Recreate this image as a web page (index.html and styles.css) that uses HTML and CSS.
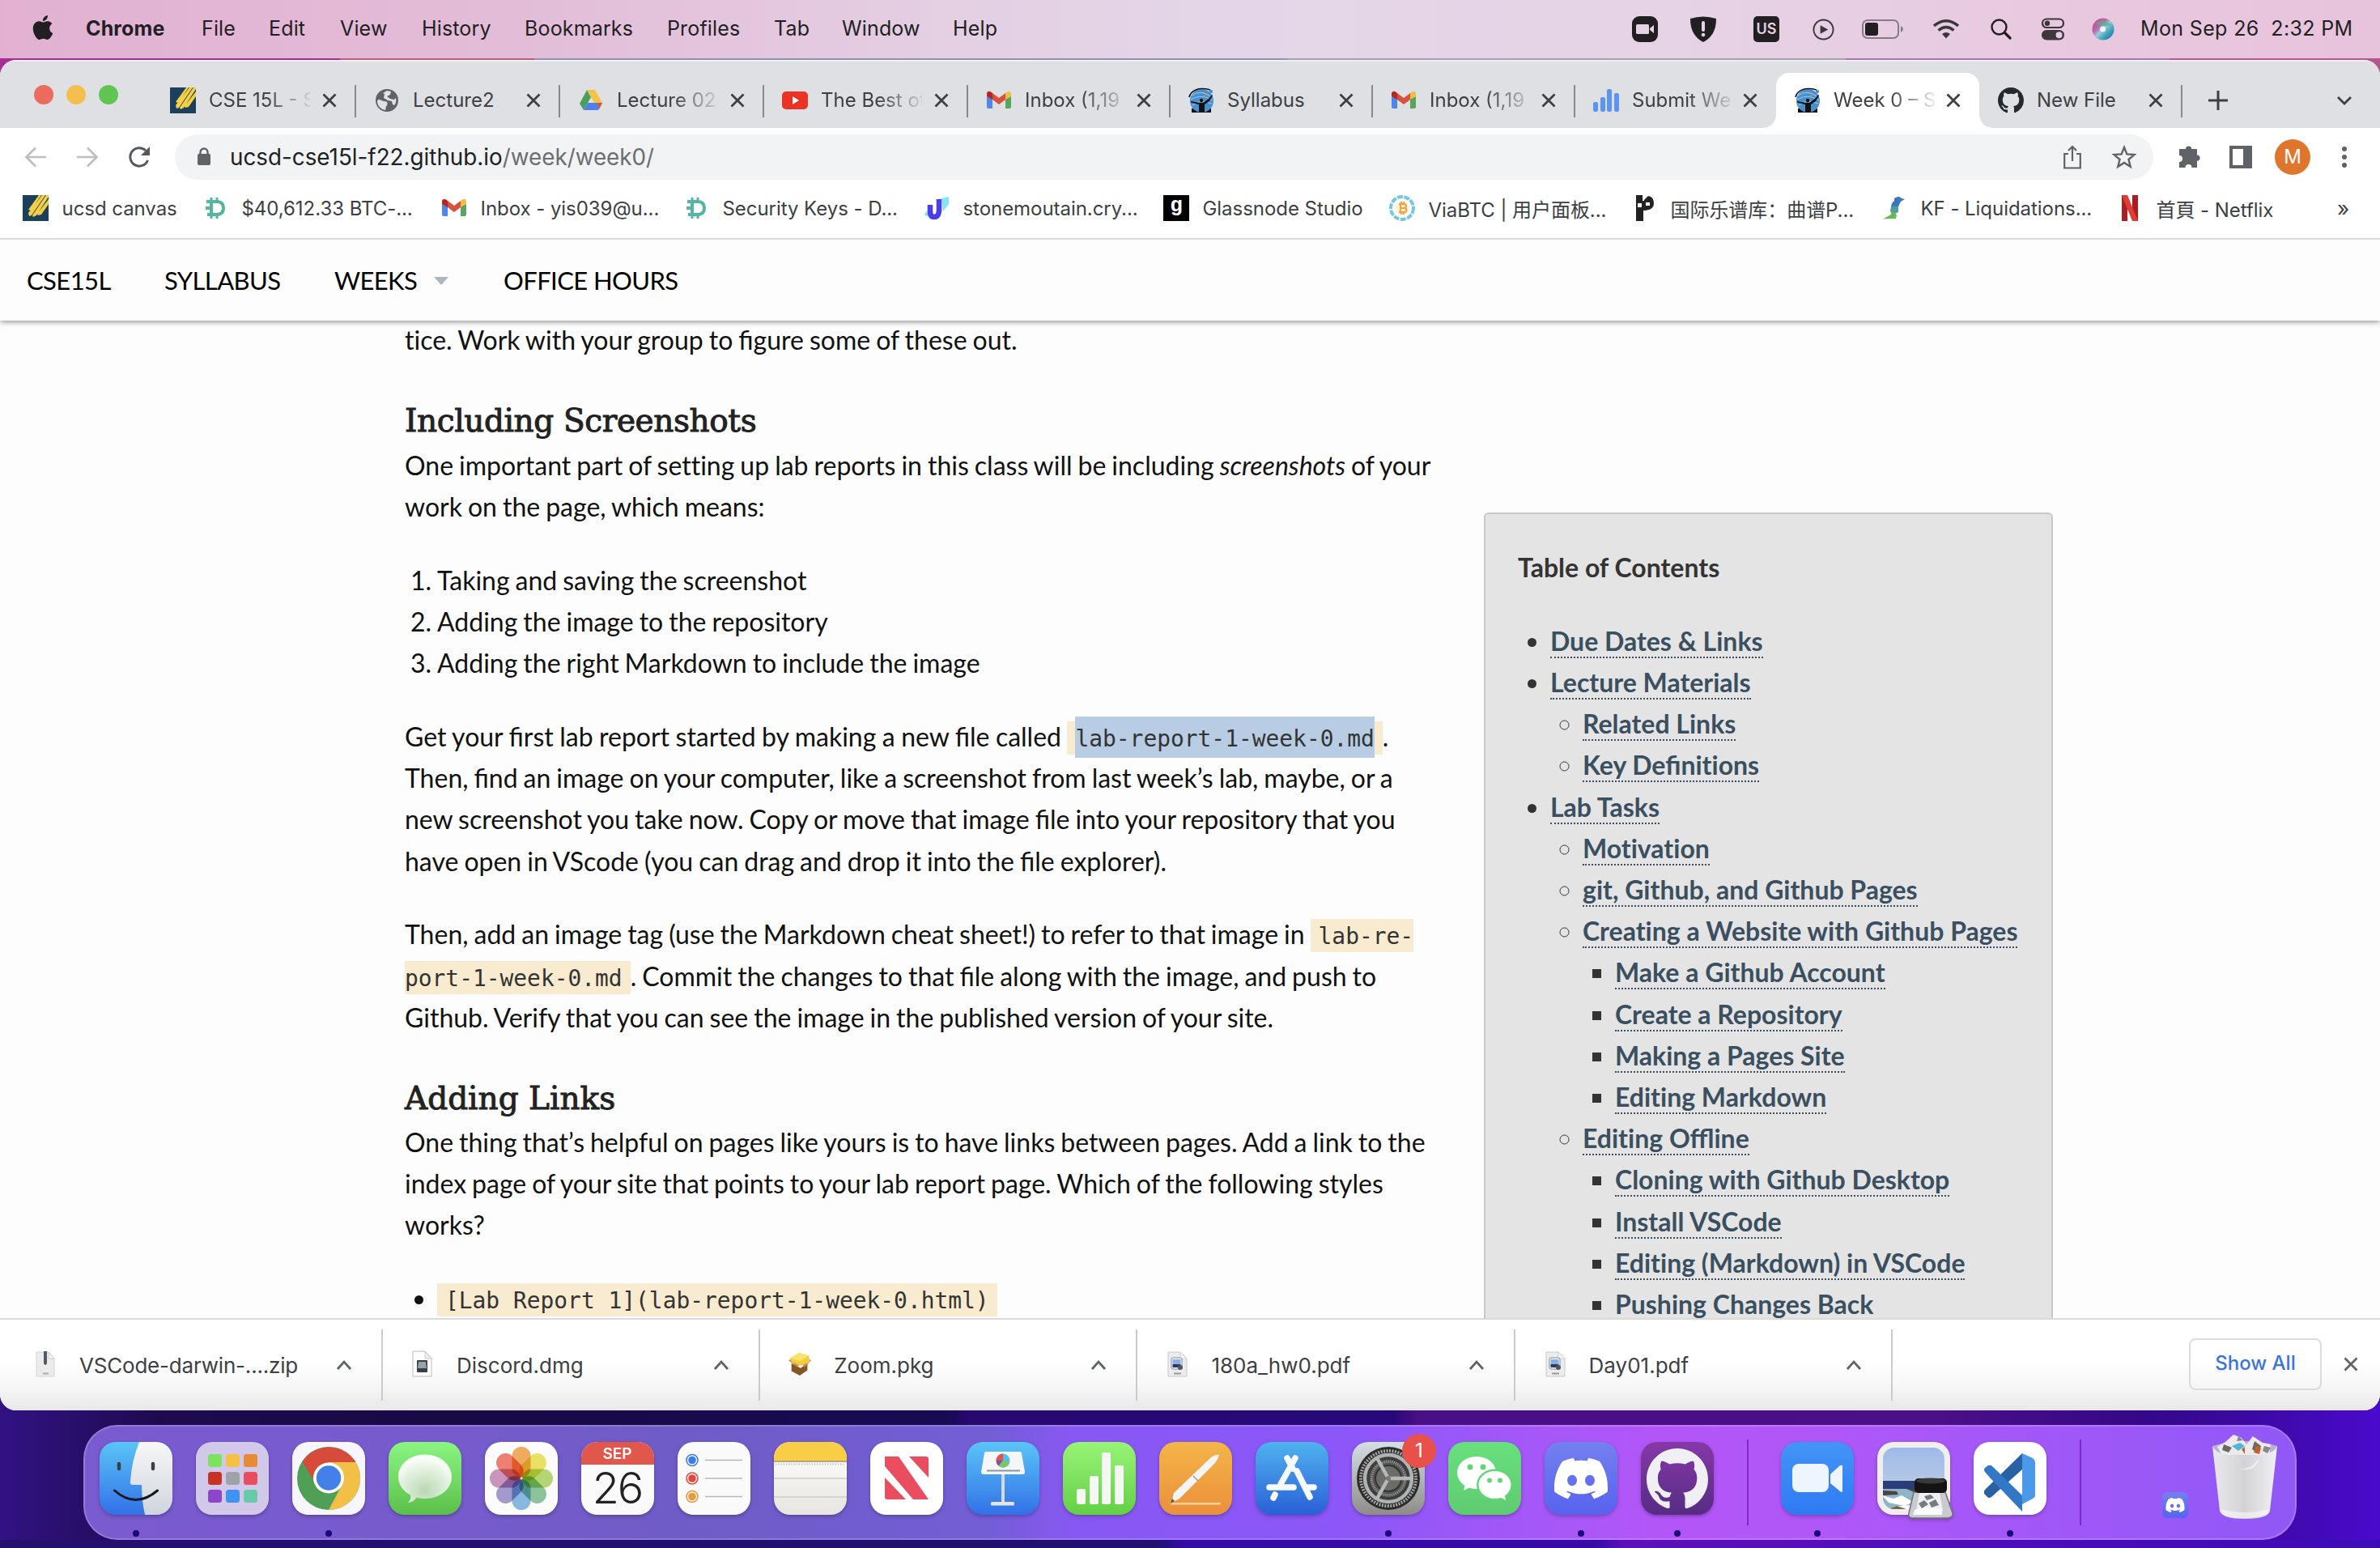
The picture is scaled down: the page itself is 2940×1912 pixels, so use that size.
FILE: index.html
```html
<!DOCTYPE html>
<html lang="en">
<head>
<meta charset="utf-8">
<title>Week 0 – Software Tools</title>
<link rel="stylesheet" href="styles.css">
</head>
<body>
<svg class="defs" width="0" height="0" aria-hidden="true">
  <defs>
    <linearGradient id="g-blue" x1="0" y1="0" x2="0" y2="1"><stop offset="0" stop-color="#5ac4f7"/><stop offset="1" stop-color="#3271e8"/></linearGradient>
    <linearGradient id="g-store" x1="0" y1="0" x2="0" y2="1"><stop offset="0" stop-color="#4fb3ee"/><stop offset="1" stop-color="#2a5fd8"/></linearGradient>
    <linearGradient id="g-green" x1="0" y1="0" x2="0" y2="1"><stop offset="0" stop-color="#8bf582"/><stop offset="1" stop-color="#5bc04a"/></linearGradient>
    <linearGradient id="g-num" x1="0" y1="0" x2="0" y2="1"><stop offset="0" stop-color="#98f477"/><stop offset="1" stop-color="#63d044"/></linearGradient>
    <linearGradient id="g-orange" x1="0" y1="0" x2="0" y2="1"><stop offset="0" stop-color="#f4b548"/><stop offset="1" stop-color="#eb8f3c"/></linearGradient>
    <linearGradient id="g-grey" x1="0" y1="0" x2="0" y2="1"><stop offset="0" stop-color="#d5dfe6"/><stop offset="1" stop-color="#8e8c89"/></linearGradient>
    <linearGradient id="g-white" x1="0" y1="0" x2="0" y2="1"><stop offset="0" stop-color="#f7f7f7"/><stop offset="1" stop-color="#cfd5dd"/></linearGradient>
    <linearGradient id="g-paper" x1="0" y1="0" x2="0" y2="1"><stop offset="0" stop-color="#ffffff"/><stop offset="1" stop-color="#e8e5e0"/></linearGradient>
    <linearGradient id="g-disc" x1="0" y1="0" x2="0" y2="1"><stop offset="0" stop-color="#7480ef"/><stop offset="1" stop-color="#5763ee"/></linearGradient>
    <linearGradient id="g-hub" x1="0" y1="0" x2="0" y2="1"><stop offset="0" stop-color="#8638a8"/><stop offset="1" stop-color="#562c84"/></linearGradient>
    <linearGradient id="g-zoom" x1="0" y1="0" x2="0" y2="1"><stop offset="0" stop-color="#4394f8"/><stop offset="1" stop-color="#2f7af3"/></linearGradient>
    <linearGradient id="g-wechat" x1="0" y1="0" x2="0" y2="1"><stop offset="0" stop-color="#68e07e"/><stop offset="1" stop-color="#5fcb70"/></linearGradient>
    <linearGradient id="g-sky" x1="0" y1="0" x2="0" y2="1"><stop offset="0" stop-color="#9bb7e9"/><stop offset="1" stop-color="#b4c9e6"/></linearGradient>
    <linearGradient id="g-bin" x1="0" y1="0" x2="1" y2="0"><stop offset="0" stop-color="#e9e8ec"/><stop offset=".5" stop-color="#d3d2d5"/><stop offset="1" stop-color="#f1f0f4"/></linearGradient>
    <radialGradient id="g-bubble" cx=".5" cy=".75" r=".7"><stop offset="0" stop-color="#b9d8b3"/><stop offset="1" stop-color="#fbfffa"/></radialGradient>
    <linearGradient id="g-siri" x1="0" y1="0" x2="1" y2="1"><stop offset="0" stop-color="#d83a72"/><stop offset=".35" stop-color="#b36bb4"/><stop offset=".5" stop-color="#9fc9dd"/><stop offset=".7" stop-color="#3aa6b4"/><stop offset="1" stop-color="#2c4fc0"/></linearGradient>
    <symbol id="octocat" viewBox="0 0 16 16"><path d="M8 0C3.58 0 0 3.58 0 8c0 3.54 2.29 6.53 5.47 7.59.4.07.55-.17.55-.38 0-.19-.01-.82-.01-1.49-2.01.37-2.53-.49-2.69-.94-.09-.23-.48-.94-.82-1.13-.28-.15-.68-.52-.01-.53.63-.01 1.08.58 1.23.82.72 1.21 1.87.87 2.33.66.07-.52.28-.87.51-1.07-1.78-.2-3.64-.89-3.64-3.95 0-.87.31-1.59.82-2.15-.08-.2-.36-1.02.08-2.12 0 0 .67-.21 2.2.82.64-.18 1.32-.27 2-.27.68 0 1.36.09 2 .27 1.53-1.04 2.2-.82 2.2-.82.44 1.1.16 1.92.08 2.12.51.56.82 1.27.82 2.15 0 3.07-1.87 3.75-3.65 3.95.29.25.54.73.54 1.48 0 1.07-.01 1.93-.01 2.2 0 .21.15.46.55.38A8.013 8.013 0 0016 8c0-4.42-3.58-8-8-8z"/></symbol>
    <symbol id="discord" viewBox="0 0 24 24"><path d="M20.317 4.3698a19.7913 19.7913 0 00-4.8851-1.5152.0741.0741 0 00-.0785.0371c-.211.3753-.4447.8648-.6083 1.2495-1.8447-.2762-3.68-.2762-5.4868 0-.1636-.3933-.4058-.8742-.6177-1.2495a.077.077 0 00-.0785-.037 19.7363 19.7363 0 00-4.8852 1.515.0699.0699 0 00-.0321.0277C.5334 9.0458-.319 13.5799.0992 18.0578a.0824.0824 0 00.0312.0561c2.0528 1.5076 4.0413 2.4228 5.9929 3.0294a.0777.0777 0 00.0842-.0276c.4616-.6304.8731-1.2952 1.226-1.9942a.076.076 0 00-.0416-.1057c-.6528-.2476-1.2743-.5495-1.8722-.8923a.077.077 0 01-.0076-.1277c.1258-.0943.2517-.1923.3718-.2914a.0743.0743 0 01.0776-.0105c3.9278 1.7933 8.18 1.7933 12.0614 0a.0739.0739 0 01.0785.0095c.1202.099.246.1981.3728.2924a.077.077 0 01-.0066.1276 12.2986 12.2986 0 01-1.873.8914.0766.0766 0 00-.0407.1067c.3604.698.7719 1.3628 1.225 1.9932a.076.076 0 00.0842.0286c1.961-.6067 3.9495-1.5219 6.0023-3.0294a.077.077 0 00.0313-.0552c.5004-5.177-.8382-9.6739-3.5485-13.6604a.061.061 0 00-.0312-.0286zM8.02 15.3312c-1.1825 0-2.1569-1.0857-2.1569-2.419 0-1.3332.9555-2.4189 2.157-2.4189 1.2108 0 2.1757 1.0952 2.1568 2.419 0 1.3332-.9555 2.4189-2.1569 2.4189zm7.9748 0c-1.1825 0-2.1569-1.0857-2.1569-2.419 0-1.3332.9554-2.4189 2.1569-2.4189 1.2108 0 2.1757 1.0952 2.1568 2.419 0 1.3332-.946 2.4189-2.1568 2.4189z"/></symbol>
    <symbol id="canvas" viewBox="0 0 32 32"><path fill="#1c3f5c" d="M0 0h32v32H0z"/><path fill="#f5cf45" d="M20 0h3L10 19l-3-1zM24 0h4L11 25l-3 1-1-4zM29 0h3v2L17 25l-4 2-1-2zM32 5v6L23 24l-4 1-1-2z"/></symbol>
    <symbol id="gmail" viewBox="0 0 32 32"><path fill="#4f86ec" d="M1 11v13a2 2 0 002 2h5V14z"/><path fill="#58a55c" d="M31 11v13a2 2 0 01-2 2h-5V14z"/><path fill="#b5271d" d="M1 11V8c0-3 3-4 5-2.500l2 1.500v8z"/><path fill="#f2bd42" d="M31 11V8c0-3-3-4-5-2.500L24 7v8z"/><path fill="#d85040" d="M8 7l8 6 8-6v8l-8 6-8-6z"/></symbol>
    <symbol id="week" viewBox="0 0 32 32"><path fill="#111" d="M4 26h24v5H4z"/><circle cx="16.500" cy="16.500" r="14.500" fill="#4a90cf"/><path d="M4 10q12-8 24 2M3 15q13-8 27 1M5 22q10-8 24-2" fill="none" stroke="#8fc4ec" stroke-width="1.200"/><path d="M1 12C3 4 12-1 27 3" fill="none" stroke="#111" stroke-width="1.600"/><circle cx="28" cy="5" r="2" fill="#3d86d6"/><circle cx="20" cy="10" r="1.300" fill="#e07a3a"/><circle cx="16" cy="16" r="2.200" fill="#111"/><path fill="#111" d="M3 17l11 2h4l7-5 4-5 1 1-4 7-6 4v10h-7V21L3 18.500z"/></symbol>
    <symbol id="btc" viewBox="0 0 32 32"><path fill="none" stroke="#55b5a0" stroke-width="4" d="M5 8h14q7 1 7 8t-7 8H6M11 9v15M4 16h8"/><path stroke="#55b5a0" stroke-width="3" d="M11 3v5M18 3v5M11 25v4M18 25v4"/></symbol>
    <symbol id="close" viewBox="0 0 20 20"><path d="M2.500 2.500l15 15M17.500 2.500l-15 15" fill="none" stroke="currentColor" stroke-width="2.800"/></symbol>
    <symbol id="up" viewBox="0 0 20 14"><path d="M2 12l8-9 8 9" fill="none" stroke="currentColor" stroke-width="2.800"/></symbol>
    <symbol id="pdf" viewBox="0 0 28 34"><path fill="#ececec" stroke="#c9c9c9" d="M3 2h15l8 8v22H3z"/><path fill="#fff" stroke="#ccc" d="M18 2v8h8z"/><rect x="7" y="9" width="13" height="14" rx="2" fill="#f9f9f9" stroke="#7b8ca8"/><path fill="#8ab0e6" d="M8.500 11h10v6h-10z"/><path fill="#2c3c60" d="M8.500 17h10v4h-10z"/><circle cx="18" cy="21" r="3" fill="#555"/><path stroke="#999" stroke-width="2" d="M10 28.500h9"/></symbol>
  </defs>
</svg>

<div class="desktop">
  <header class="menubar">
    <svg class="apple" viewBox="0 0 24 24"><path d="M12.152 6.896c-.948 0-2.415-1.078-3.960-1.040-2.040.027-3.910 1.183-4.961 3.014-2.117 3.675-.546 9.103 1.519 12.090 1.013 1.454 2.208 3.090 3.792 3.039 1.520-.065 2.090-.987 3.935-.987 1.831 0 2.350.987 3.960.948 1.637-.026 2.676-1.480 3.676-2.948 1.156-1.688 1.636-3.325 1.662-3.415-.039-.013-3.182-1.221-3.220-4.857-.026-3.040 2.480-4.494 2.597-4.559-1.429-2.090-3.623-2.324-4.390-2.376-2-.156-3.675 1.090-4.610 1.090zM15.530 3.830c.843-1.012 1.400-2.427 1.245-3.830-1.207.052-2.662.805-3.532 1.818-.780.896-1.454 2.338-1.273 3.714 1.338.104 2.715-.688 3.559-1.701"/></svg>
    <nav class="menus">
      <b>Chrome</b><span>File</span><span>Edit</span><span>View</span><span>History</span><span>Bookmarks</span><span>Profiles</span><span>Tab</span><span>Window</span><span>Help</span>
    </nav>
    <div class="status">
      <svg viewBox="0 0 32 32" width="32" height="32"><rect width="32" height="32" rx="9" fill="#221f22"/><rect x="5" y="10" width="16" height="12" rx="1.500" fill="#e6d2e5"/><path fill="#e6d2e5" d="M22 15l5-4v10l-5-4z"/></svg>
      <svg viewBox="0 0 32 32" width="32" height="32"><path fill="#221f22" d="M0 3Q16-2 32 3C32 18 26 27 16 32 6 27 0 18 0 3z"/><path stroke="#e6d2e5" stroke-width="4" stroke-linecap="round" d="M16 8v9"/><circle cx="16" cy="23" r="2.300" fill="#e6d2e5"/></svg>
      <span class="kbd">US</span>
      <svg viewBox="0 0 28 28" width="27" height="27"><circle cx="14" cy="14" r="12.500" fill="none" stroke="#3c373c" stroke-width="2"/><path fill="#3c373c" d="M10 8.500l10 5.500-10 5.500z"/></svg>
      <svg viewBox="0 0 52 26" width="52" height="26"><rect x="1" y="2" width="44" height="22" rx="6" fill="none" stroke="#857a85" stroke-width="2"/><rect x="4" y="5" width="16" height="16" rx="3" fill="#221f22"/><path fill="#857a85" d="M48 9q6 4 0 8z"/></svg>
      <svg viewBox="0 0 32 24" width="32" height="24"><g fill="none" stroke="#3c373c" stroke-width="3.400"><path d="M1 8Q16-4.500 31 8"/><path d="M6.500 13.500q9.500-8 19 0"/></g><path fill="#3c373c" d="M11 18q5-4 10 0l-5 5.500z"/></svg>
      <svg viewBox="0 0 26 26" width="26" height="26"><circle cx="10.500" cy="10.500" r="9" fill="none" stroke="#221f22" stroke-width="2.400"/><path stroke="#221f22" stroke-width="3.200" stroke-linecap="round" d="M17.500 17.500l6.500 6.500"/></svg>
      <svg viewBox="0 0 28 28" width="28" height="28"><rect x="1" y="1.500" width="26" height="10.500" rx="5.200" fill="none" stroke="#3c373c" stroke-width="2.200"/><circle cx="7" cy="6.700" r="3.200" fill="#3c373c"/><rect y="15" width="28" height="12.500" rx="6.200" fill="#3c373c"/><circle cx="21.500" cy="21.200" r="4" fill="#e6cadf"/></svg>
      <svg viewBox="0 0 28 28" width="28" height="28"><circle cx="14" cy="14" r="13.500" fill="url(#g-siri)"/><path d="M4 7Q14 0 25 9 14 12 4 7z" fill="#4fb58c" opacity=".7"/><circle cx="13.500" cy="14" r="3.500" fill="#fff" opacity=".85"/></svg>
      <span class="clock">Mon Sep 26&nbsp; 2:32 PM</span>
    </div>
  </header>

  <main class="window">
    <div class="tabstrip">
      <div class="lights"><i class="red"></i><i class="amber"></i><i class="green"></i></div>
      <div class="tabs">
        <div class="tab sep"><svg class="fav"><use href="#canvas"/></svg><span class="fade">CSE 15L - S</span><svg class="x"><use href="#close"/></svg></div>
        <div class="tab sep"><svg class="fav" viewBox="0 0 32 32"><circle cx="16" cy="16" r="14" fill="#5f6368"/><path fill="#dee0e4" d="M5 15c4 0 5 2 8 2 4 0 4 3 3 5-2 2-1 4-2 6C8 27 4 22 4 17zM16 4l5 1-1 4-4 2 4 3 5 1 2-2c1 3 0 7-2 9l-2-1-1-4-5-1-5-3 1-5-2-1z"/></svg><span>Lecture2</span><svg class="x"><use href="#close"/></svg></div>
        <div class="tab sep"><svg class="fav" viewBox="0 0 32 32"><path fill="#4c9f5a" d="M11 3l5 9-9 16-5-8z"/><path fill="#f5c344" d="M11 3h10l9 16H20z"/><path fill="#4f80e8" d="M7 28l5-9h18l-5 9z"/><path fill="#d9513f" d="M24 19h6l-4 8z"/></svg><span class="fade">Lecture 02</span><svg class="x"><use href="#close"/></svg></div>
        <div class="tab sep"><svg class="fav" viewBox="0 0 32 32"><rect y="5" width="32" height="22" rx="5" fill="#ea3323"/><path fill="#fff" d="M13 11l8 5-8 5z"/></svg><span class="fade">The Best of</span><svg class="x"><use href="#close"/></svg></div>
        <div class="tab sep"><svg class="fav"><use href="#gmail"/></svg><span class="fade">Inbox (1,19</span><svg class="x"><use href="#close"/></svg></div>
        <div class="tab sep"><svg class="fav"><use href="#week"/></svg><span>Syllabus</span><svg class="x"><use href="#close"/></svg></div>
        <div class="tab sep"><svg class="fav"><use href="#gmail"/></svg><span class="fade">Inbox (1,19</span><svg class="x"><use href="#close"/></svg></div>
        <div class="tab"><svg class="fav" viewBox="0 0 32 32"><g fill="#5b95ef"><rect y="18" width="6" height="12" rx="2"/><rect x="9" y="12" width="6" height="18" rx="2"/><rect x="17" y="2" width="6" height="28" rx="2"/><rect x="26" y="7" width="6" height="23" rx="2"/></g></svg><span class="fade">Submit We</span><svg class="x"><use href="#close"/></svg></div>
        <div class="tab active"><svg class="fav"><use href="#week"/></svg><span class="fade">Week 0 – S</span><svg class="x"><use href="#close"/></svg></div>
        <div class="tab sep"><svg class="fav" fill="#24292f"><use href="#octocat"/></svg><span>New File</span><svg class="x"><use href="#close"/></svg></div>
      </div>
      <svg class="plus" viewBox="0 0 26 26"><path d="M13 1v24M1 13h24" stroke="#3c4043" stroke-width="3"/></svg>
      <svg class="tabsearch" viewBox="0 0 20 14"><path d="M2 3l8 8 8-8" fill="none" stroke="#3c4043" stroke-width="2.800"/></svg>
    </div>

    <div class="toolbar">
      <svg class="nav-ico" viewBox="0 0 28 28"><path d="M27 14H3M14 2.500L2.500 14 14 25.500" fill="none" stroke="#bcbec0" stroke-width="2.600"/></svg>
      <svg class="nav-ico" viewBox="0 0 28 28"><path d="M1 14h24M14 2.500L25.500 14 14 25.500" fill="none" stroke="#bcbec0" stroke-width="2.600"/></svg>
      <svg class="nav-ico" viewBox="0 0 28 28"><path d="M24.500 18A11.200 11.200 0 1 1 22 6" fill="none" stroke="#55585c" stroke-width="3"/><path fill="#55585c" d="M27 1v11H16z"/></svg>
      <div class="omnibox">
        <svg class="lock" viewBox="0 0 18 24"><rect x="1" y="8" width="16" height="14" rx="2" fill="#5f6368"/><path d="M4.500 9V6a4.500 4.500 0 019 0v3" fill="none" stroke="#5f6368" stroke-width="2.400"/></svg>
        <span class="url">ucsd-cse15l-f22.github.io<span>/week/week0/</span></span>
        <svg class="share" viewBox="0 0 24 30"><path d="M7 11H2.200v17.500h19.600V11H17M12 20V2.500M7 7l5-5 5 5" fill="none" stroke="#5f6368" stroke-width="2.200"/></svg>
        <svg class="star" viewBox="0 0 30 30"><path d="M15 3l3.400 8.400 9 .7-6.900 5.900 2.200 8.800L15 22l-7.700 4.800 2.200-8.800-6.900-5.900 9-.7z" fill="none" stroke="#5f6368" stroke-width="2.400"/></svg>
      </div>
      <svg class="ext" viewBox="0 0 30 30"><path fill="#5f6368" d="M11 5a3.600 3.600 0 017.200 0H25v7.500a3.600 3.600 0 010 7.200V28h-6.500a4 4 0 00-8 0H3v-7a4 4 0 000-8V5z"/></svg>
      <svg class="panel" viewBox="0 0 28 28"><path fill="#5f6368" fill-rule="evenodd" d="M0 0h28v28H0zM4 4v20h13V4z"/></svg>
      <span class="avatar">M</span>
      <svg class="dots" viewBox="0 0 8 28"><g fill="#5f6368"><circle cx="4" cy="4" r="3"/><circle cx="4" cy="14" r="3"/><circle cx="4" cy="24" r="3"/></g></svg>
    </div>

    <div class="bookmarks">
      <a><svg class="fav"><use href="#canvas"/></svg>ucsd canvas</a>
      <a><svg class="fav"><use href="#btc"/></svg>$40,612.33 BTC-...</a>
      <a><svg class="fav"><use href="#gmail"/></svg>Inbox - yis039@u...</a>
      <a><svg class="fav"><use href="#btc"/></svg>Security Keys - D...</a>
      <a><svg class="fav" viewBox="0 0 32 32"><path d="M2 25l6-6" stroke="#7fe6f5" stroke-width="4"/><path d="M22 4l9-2v9l-7 9z" fill="#7fe6f5"/><path d="M8 12v9q0 6 5 6t6-7V5" fill="none" stroke="#4a3df0" stroke-width="6.500"/></svg>stonemoutain.cry...</a>
      <a><span class="fav glass">g</span>Glassnode Studio</a>
      <a><svg class="fav" viewBox="0 0 32 32"><circle cx="16" cy="16" r="14" fill="none" stroke="#77c6e0" stroke-width="4" stroke-dasharray="7 1.500"/><circle cx="16" cy="16" r="8.500" fill="#fdf0dc"/><path d="M12 11h6q3 0 3 2.500T18 16h-5 5.500q3 0 3 2.500t-3 2.500H12M14 11v10M15 8v3M18 8v3M15 21v3M18 21v3" fill="none" stroke="#f2a33c" stroke-width="2"/></svg>ViaBTC | 用户面板...</a>
      <a><svg class="fav" viewBox="0 0 32 32"><path fill="#222" d="M6 0h9v7l6-6q7 1 7 9 0 9-13 9v13H6z"/><path fill="#fff" d="M8 10h5v5H8zM18 9h5v4h-5zM14 0h2v7h-2z"/></svg>国际乐谱库：曲谱P...</a>
      <a><svg class="fav" viewBox="0 0 32 32"><path fill="#3b77bd" d="M16 4q6-4 9 0l4 1-5 3-3 6-9 1q0-5 4-8z"/><path fill="#4f9e9e" d="M12 14h9v7l-7 3-3-4z"/><path fill="#6cb854" d="M14 20l5 4-1 5-16 .500 9-5z"/></svg>KF - Liquidations...</a>
      <a><svg class="fav" viewBox="0 0 32 32"><path fill="#a91f1f" d="M6 0h7v32H6zM19 0h7v32h-7z"/><path fill="#e23b33" d="M6 0h7l13 32h-7z"/></svg>首頁 - Netflix</a>
      <span class="more">»</span>
    </div>

    <section class="page">
      <nav class="sitenav"><span>CSE15L</span><span>SYLLABUS</span><span>WEEKS<i class="caret"></i></span><span>OFFICE HOURS</span></nav>
      <div class="content">
        <article>
          <p><span class="plain">tice.</span> Work with your group to figure some of these out.</p>
          <h3>Including Screenshots</h3>
          <p>One important part of <span class="plain">setting</span> up lab reports in this class will be including <em>screenshots</em> of your<br>work on the page, which means:</p>
          <ol><li>Taking and saving the screenshot</li><li>Adding the image to the repository</li><li>Adding the right Markdown to include the image</li></ol>
          <p><span class="loose">Get your first lab report started by making a new file called </span><code><mark>lab-report-1-week-0.md</mark></code>.<br>Then, find an image on your computer, like a screenshot from last week’s lab, maybe, or a<br>new screenshot you take now. Copy or move that image file into your repository that you<br>have open in VScode (you can drag and drop it into the file explorer).</p>
          <p>Then, add an image tag (use the Markdown cheat sheet!) to refer to that image in <code>lab-re-<br>port-1-week-0.md</code>. Commit the changes to that file along with the image, and push to<br>Github. Verify that you can see the image in the published version of your site.</p>
          <h3 class="second">Adding Links</h3>
          <p>One thing that’s helpful on pages like yours is to have links between pages. Add a link to the<br>index page of your site that points to your lab report page. Which of the following styles<br>works?</p>
          <ul><li><code>[Lab Report 1](lab-report-1-week-0.html)</code></li></ul>
        </article>
        <aside class="toc">
          <div class="toc-title">Table of Contents</div>
          <ul>
            <li><a>Due Dates &amp; Links</a></li>
            <li><a>Lecture Materials</a>
              <ul><li><a>Related Links</a></li><li><a class="joined">Key Defini<span class="plain">tions</span></a></li></ul></li>
            <li><a>Lab Tasks</a>
              <ul>
                <li><a>Motivation</a></li>
                <li><a>git, Github, and Github Pages</a></li>
                <li><a>Creating a Website with Github Pages</a>
                  <ul><li><a>Make a Github Account</a></li><li><a>Create a Repository</a></li><li><a>Making a Pages Site</a></li><li><a>Editing Markdown</a></li></ul></li>
                <li><a>Editing <span class="joined">Offline</span></a>
                  <ul><li><a>Cloning with Github Desktop</a></li><li><a>Install VSCode</a></li><li><a>Editing (Markdown) in VSCode</a></li><li><a>Pushing Changes Back</a></li></ul></li>
              </ul></li>
          </ul>
        </aside>
      </div>
    </section>

    <footer class="shelf">
      <div class="dl first"><svg class="file" viewBox="0 0 28 34"><path fill="#ececec" stroke="#d4d4d4" d="M3 2h15l7 8v22H3z"/><path fill="#fafafa" stroke="#ccc" d="M18 2v8h7z"/><path fill="#4e5a66" d="M12 1h4v15q-2 4-4 0z"/><path stroke="#aaa" stroke-width="2" d="M11 28.500h7"/></svg><span>VSCode-darwin-....zip</span><svg class="up"><use href="#up"/></svg></div>
      <div class="dl"><svg class="file" viewBox="0 0 28 34"><path fill="#fdfdfd" stroke="#bdbdbd" d="M2 1h15l8 9v22H2z"/><path fill="#eee" stroke="#ccc" d="M17 1v9h8z"/><rect x="7" y="12" width="13" height="15" rx="1" fill="#3a3f42"/><path fill="#93a5a8" d="M9 14h9l1 8H8z"/></svg><span>Discord.dmg</span><svg class="up"><use href="#up"/></svg></div>
      <div class="dl"><svg class="file" viewBox="0 0 32 34"><path fill="#8a5526" d="M5 16l12 6 9-6v9l-10 7-11-6z"/><path fill="#c98d56" d="M1 12l6-3 10 6-4 6zM31 12l-5-3-9 6 5 6z"/><path fill="#f2cd3c" d="M3 9l12-7 13 4 1 8-12 5L5 14z"/><path fill="#f8e26c" d="M3 9l12-7 13 4-12 7z"/></svg><span>Zoom.pkg</span><svg class="up"><use href="#up"/></svg></div>
      <div class="dl"><svg class="file"><use href="#pdf"/></svg><span>180a_hw0.pdf</span><svg class="up"><use href="#up"/></svg></div>
      <div class="dl"><svg class="file"><use href="#pdf"/></svg><span>Day01.pdf</span><svg class="up"><use href="#up"/></svg></div>
      <span class="showall">Show All</span>
      <svg class="x shelf-x"><use href="#close"/></svg>
    </footer>
  </main>

  <div class="dock">
    <div class="app run"><svg viewBox="0 0 90 90"><rect width="90" height="90" rx="20" fill="url(#g-blue)"/><path fill="url(#g-white)" d="M49 0h21a20 20 0 0120 20v50a20 20 0 01-20 20H56q-4-18-4-37H40q-3-1-2-5Q40 22 49 0z"/><path d="M24 27v6M66 27v6" stroke="#3a3f45" stroke-width="4.400" stroke-linecap="round"/><path d="M18.500 60q26 23 53 0" fill="none" stroke="#15181c" stroke-width="3" stroke-linecap="round"/></svg></div>
    <div class="app"><svg viewBox="0 0 90 90"><rect width="90" height="90" rx="20" fill="#d2c9ea"/><rect x="15" y="15" width="17" height="16" rx="3.500" fill="#7be35e"/><rect x="37" y="15" width="17" height="16" rx="3.500" fill="#f5c144"/><rect x="59" y="15" width="17" height="16" rx="3.500" fill="#e68a37"/><rect x="15" y="37" width="17" height="16" rx="3.500" fill="#c73325"/><rect x="37" y="37" width="17" height="16" rx="3.500" fill="#9da3a6"/><rect x="59" y="37" width="17" height="16" rx="3.500" fill="#e94e60"/><rect x="15" y="59" width="17" height="16" rx="3.500" fill="#8f45c8"/><rect x="37" y="59" width="17" height="16" rx="3.500" fill="#3f92f0"/><rect x="59" y="59" width="17" height="16" rx="3.500" fill="#69c9ab"/></svg></div>
    <div class="app run"><svg viewBox="0 0 90 90"><rect width="90" height="90" rx="20" fill="#f7f5fd"/><circle cx="45" cy="45" r="39" fill="#4f9f57"/><path fill="#d74b3b" d="M12.500 24.500A39 39 0 0178.500 25H45L28 50z"/><path fill="#f2c046" d="M78.500 25A39 39 0 0145 84L62 52 45 25z"/><circle cx="45" cy="44.500" r="19" fill="#fff"/><circle cx="45" cy="44.500" r="15.200" fill="#4480ea"/></svg></div>
    <div class="app"><svg viewBox="0 0 90 90"><rect width="90" height="90" rx="20" fill="url(#g-green)"/><path fill="url(#g-bubble)" d="M45 15.500c18 0 33 12 33 27.500S63 70 45 70c-4 0-7-.4-10-1.300-3 3-6 6-11 6.300 3-3 3.500-6 3-9.500C18 61 12 53 12 43c0-15.500 15-27.500 33-27.500z"/></svg></div>
    <div class="app"><svg viewBox="0 0 90 90"><rect width="90" height="90" rx="20" fill="#fcfcfc"/><g class="petals"><rect x="33.500" y="6" width="23" height="38" rx="11.500" fill="#f09a37"/><rect x="33.500" y="6" width="23" height="38" rx="11.500" fill="#e8dd3f" transform="rotate(45 45 45)"/><rect x="33.500" y="6" width="23" height="38" rx="11.500" fill="#a3cf52" transform="rotate(90 45 45)"/><rect x="33.500" y="6" width="23" height="38" rx="11.500" fill="#72b884" transform="rotate(135 45 45)"/><rect x="33.500" y="6" width="23" height="38" rx="11.500" fill="#6aa9dd" transform="rotate(180 45 45)"/><rect x="33.500" y="6" width="23" height="38" rx="11.500" fill="#8c84c2" transform="rotate(225 45 45)"/><rect x="33.500" y="6" width="23" height="38" rx="11.500" fill="#c27bae" transform="rotate(270 45 45)"/><rect x="33.500" y="6" width="23" height="38" rx="11.500" fill="#ee6350" transform="rotate(315 45 45)"/></g></svg></div>
    <div class="app"><div class="cal"><b>SEP</b><span>26</span></div></div>
    <div class="app"><svg viewBox="0 0 90 90"><rect width="90" height="90" rx="20" fill="#fbfafa"/><path d="M34 22.500h46M34 45h46M34 67.500h46" stroke="#b7b5b9" stroke-width="1.600"/><g stroke-width="1.600" fill="none"><circle cx="18" cy="22.500" r="7" stroke="#3a7cf0"/><circle cx="18" cy="45" r="7" stroke="#e0493c"/><circle cx="18" cy="67.500" r="7" stroke="#eb9a3b"/></g><circle cx="18" cy="22.500" r="4.800" fill="#3a7cf0"/><circle cx="18" cy="45" r="4.800" fill="#e0493c"/><circle cx="18" cy="67.500" r="4.800" fill="#eb9a3b"/></svg></div>
    <div class="app"><svg viewBox="0 0 90 90"><rect width="90" height="90" rx="20" fill="url(#g-paper)"/><path fill="#f8ce46" d="M0 23v-3A20 20 0 0120 0h50a20 20 0 0120 20v3z"/><path d="M0 24h90" stroke="#9b8a55" stroke-width="1.400"/><path d="M2 27.500h86" stroke="#bbb" stroke-width="2" stroke-dasharray="1.200 2"/><path d="M0 45h90M0 68h90" stroke="#cfcdca" stroke-width="1.600"/></svg></div>
    <div class="app"><svg viewBox="0 0 90 90"><rect width="90" height="90" rx="20" fill="#fff"/><path fill="#ea4c60" d="M18 18h17l37 53H53L18 30zM48 18h21a3 3 0 013 3v23zM18 44l26 27H21a3 3 0 01-3-3z"/></svg></div>
    <div class="app"><svg viewBox="0 0 90 90"><rect width="90" height="90" rx="20" fill="url(#g-blue)"/><path d="M45 38v38" stroke="#d8d9dc" stroke-width="4"/><rect x="30" y="74" width="29" height="4.500" rx="1.500" fill="#e4e4e6"/><path fill="#f5f6f8" d="M22 14q0-2 2-2h42q2 0 2 2l4 23q0 3-3 3H21q-3 0-3-3z"/><path stroke="#8c97a8" stroke-width="2" d="M25 35.500h41"/><circle cx="45" cy="23" r="8.500" fill="#54c0e8"/><path fill="#e2554f" d="M45 23v-8.500a8.500 8.500 0 00-8.500 8.500z"/><path fill="#8a4aa8" d="M45 23h-8.500a8.500 8.500 0 003 6.500z"/><path fill="#7cc957" d="M45 23l-5 7a8.500 8.500 0 0013-4z"/></svg></div>
    <div class="app"><svg viewBox="0 0 90 90"><rect width="90" height="90" rx="20" fill="url(#g-num)"/><g fill="#f4f7f3"><rect x="17" y="58" width="11" height="19" rx="2"/><rect x="33" y="42" width="11" height="35" rx="2"/><rect x="48" y="13" width="11" height="64" rx="2"/><rect x="64" y="29" width="11" height="48" rx="2"/></g></svg></div>
    <div class="app"><svg viewBox="0 0 90 90"><rect width="90" height="90" rx="20" fill="url(#g-orange)"/><rect x="14" y="75" width="62" height="2.500" fill="#f8cd96"/><path fill="#f6f5f5" d="M15 75l3-12L64 19q6-4 10-3-1 5-5 10L25 70z"/><path stroke="#9b9b9b" stroke-width="1.500" d="M42 42l6 6"/><path fill="#555" d="M14 76l2-6 3 3z"/></svg></div>
    <div class="app"><svg viewBox="0 0 90 90"><rect width="90" height="90" rx="20" fill="url(#g-store)"/><g stroke="#f7fafd" stroke-width="7.500" stroke-linecap="round"><path d="M49 20L31 52M39 20l7 13M51 36l16 32M17 56h30M62 56h10M24 65l-2 4"/></g></svg></div>
    <div class="app run"><svg viewBox="0 0 90 90"><rect width="90" height="90" rx="20" fill="url(#g-grey)"/><circle cx="45" cy="45" r="39" fill="#2b2b2a"/><circle cx="45" cy="45" r="34" fill="none" stroke="#a4a5a5" stroke-width="4" stroke-dasharray="2 1.500"/><circle cx="45" cy="45" r="29" fill="#3d3d3b" stroke="#b0b3b4" stroke-width="4.500"/><circle cx="45" cy="45" r="21" fill="#555552" stroke="#8d8f8f" stroke-width="3.500" stroke-dasharray="1.500 1"/><circle cx="45" cy="45" r="16" fill="#6d6c69" stroke="#333" stroke-width="2"/><path d="M45 45h30M45 45L31 20M45 45L31 70" stroke="#b5b8b9" stroke-width="4.500"/><circle cx="45" cy="45" r="3" fill="#777"/></svg><span class="badge">1</span></div>
    <div class="app"><svg viewBox="0 0 90 90"><rect width="90" height="90" rx="20" fill="url(#g-wechat)"/><ellipse cx="35" cy="38" rx="24" ry="20" fill="#fff"/><path fill="#fff" d="M21 51l-2 9 10-5z"/><ellipse cx="57.500" cy="53" rx="22.500" ry="19.500" fill="#64d577"/><ellipse cx="57.500" cy="53" rx="20" ry="17" fill="#fff"/><path fill="#fff" d="M62 67l9 5-2-9z"/><g fill="#64d577"><circle cx="27" cy="31" r="3.500"/><circle cx="43" cy="31" r="3.500"/><circle cx="51" cy="47.500" r="3"/><circle cx="64" cy="47.500" r="3"/></g></svg></div>
    <div class="app run"><svg viewBox="0 0 90 90"><rect width="90" height="90" rx="20" fill="url(#g-disc)"/><use href="#discord" x="12" y="12" width="66" height="66" fill="#fff"/></svg></div>
    <div class="app run"><svg viewBox="0 0 90 90"><rect width="90" height="90" rx="20" fill="url(#g-hub)"/><use href="#octocat" x="7" y="8" width="76" height="76" fill="#f0eff3"/></svg></div>
    <i class="rule"></i>
    <div class="app run"><svg viewBox="0 0 90 90"><rect width="90" height="90" rx="20" fill="url(#g-zoom)"/><rect x="14" y="27" width="45" height="35" rx="8" fill="#eef5fe"/><path fill="#eef5fe" d="M61 40l12-11q3-1 3 1v31q0 2-3 0L61 51z"/></svg></div>
    <div class="app"><svg viewBox="0 0 90 90" class="over"><rect width="90" height="90" rx="20" fill="#efefef"/><clipPath id="pic"><rect x="7" y="7" width="76" height="76" rx="14"/></clipPath><g clip-path="url(#pic)"><path fill="url(#g-sky)" d="M0 0h90v49H0z"/><path fill="#2c3c78" d="M0 48h90v12H0z"/><path fill="#8fb4c8" d="M0 58h90v32H0z"/><path fill="#fff" d="M6 66l14 4 10-4 14 8-10 5-20-4zM20 80l20-2 6 4-16 2z"/><path fill="#4a4440" d="M6 60l18 1 2 4-19 1zM36 58h14v6z"/><path fill="#7a6648" d="M12 84l12-5 18 6z"/></g><path fill="#c9cbd0" stroke="#6f7074" stroke-width="1.500" d="M45 62h39l9 26q1 5-6 6H43q-6-1-4-6z"/><path fill="#eef0f2" d="M52 63h25l4 22H48z"/><path fill="#fafafa" d="M46 84q18-6 34 0v6H44z"/><path fill="#777a80" d="M58 67l8-2 4 4-9 3zM51 76l7-4 5 5-8 5zM64 75l8-4 4 7-9 3z"/><rect x="46" y="45" width="40" height="18" rx="5" fill="#141414"/><ellipse cx="66" cy="48" rx="18" ry="3.500" fill="#3a3a3a"/></svg></div>
    <div class="app run"><svg viewBox="0 0 90 90"><rect width="90" height="90" rx="20" fill="#fff"/><path fill="#2862a5" d="M60 14v20L22 68q-3 2-5 0l-4-4q-1-3 1-5z"/><path fill="#3378c6" d="M14 37q-2-3 0-5l4-3q3-1 5 1l37 36v20L20 44z"/><path fill="#4a9ae9" d="M60 14l13 6q3 2 3 5v40q0 4-3 5l-13 7z"/></svg></div>
    <i class="rule two"></i>
    <svg class="mini" viewBox="0 0 90 90"><rect width="90" height="90" rx="18" fill="url(#g-disc)"/><use href="#discord" x="12" y="12" width="66" height="66" fill="#fff"/></svg>
    <svg class="trash" viewBox="0 0 80 104"><path fill="#b9b0d8" d="M0 14Q40 2 80 14L76 28H4z"/><path fill="#eceaea" d="M6 15l10-6 10-9 10 4 6 8 8-10 12 8 10 2-2 14H12z"/><path fill="#6b6867" d="M14 12l10 4-4 6-8-3zM52 8l8 6-4 9-7-5z"/><path fill="#4fb6d9" d="M24 14l10-4 6 4-8 6z"/><path fill="#c2602f" d="M54 14l6 2-2 8-7-2zM36 18l4-3v9z"/><path fill="#8b8988" d="M64 14l8 2-4 7-6-3zM32 2l6 5-8 1z"/><path fill="url(#g-bin)" d="M0 14q3 8 18 11h44q15-3 18-11l-9 80q-2 10-31 10T9 94z"/><path fill="#fff" opacity=".5" d="M10 92q30 8 60 0-2 10-30 11T10 92zM30 42q20 2 28-14-4 20-28 14z"/></svg>
  </div>
</div>
</body>
</html>
```
FILE: styles.css
```css
* { box-sizing: border-box; }
body {
  margin: 0;
  width: 2940px;
  height: 1912px;
  overflow: hidden;
  font-family: Inter, "Noto Sans CJK SC", "Liberation Sans", sans-serif;
  color: #3c4043;
}
svg { display: block; flex: none; }
i { font-style: normal; }
.defs { position: absolute; }

.desktop {
  display: flex;
  flex-direction: column;
  width: 2940px;
  height: 1912px;
  background:
    linear-gradient(90deg, #a52d98 0 420px, #c25c7c 420px 660px, #8f93ad 660px 1590px, #a99fae 1590px 2280px, #a678ac 2280px 2680px, #b3558f 2680px) 0 0 / 100% 120px no-repeat,
    linear-gradient(90deg, #251070 0, #211071 1430px, #340ba6 1460px, #380ba8 1970px, #5d10b9 2010px, #4c0cba 2500px, #3d0bb6) 0 100% / 100% 10px no-repeat,
    linear-gradient(90deg, #321284 0, #1d0b4e 200px, #180a45 560px, #190b53 1170px, #280970 1200px, #26097a 1720px, #490f84 1750px, #4b0f88 2400px, #340888 2650px, #3f09ad 2820px, #4a0acc);
}

.menubar {
  display: flex;
  align-items: center;
  height: 72px;
  flex: none;
  padding: 0 36px 0 38px;
  background: linear-gradient(90deg, #e2b1d2 0, #e3bdd8 22%, #e4cfe3 40%, #e4d6e8 52%, #e6d3e6 70%, #e8c8df 88%, #e8c3dc);
  color: #221f22;
  font-size: 25px;
}
.apple { width: 30px; height: 32px; fill: #221f22; margin-top: -5px; }
.menus {
  display: grid;
  grid-template-columns: 143px 83px 88px 101px 127px 176px 132px 84px 137px 80px;
  margin: -2px 0 0 38px;
  letter-spacing: .15px;
  white-space: nowrap;
}
.status { display: flex; align-items: center; margin-left: auto; }
.status > :nth-child(2) { margin-left: 40px; }
.status > :nth-child(3) { margin-left: 46px; }
.status > :nth-child(4) { margin-left: 41px; }
.status > :nth-child(5) { margin-left: 34px; }
.status > :nth-child(6) { margin-left: 36px; }
.status > :nth-child(7) { margin-left: 39px; }
.status > :nth-child(8) { margin-left: 37px; }
.status > :nth-child(9) { margin-left: 34px; }
.kbd {
  width: 32px; height: 32px; border-radius: 5px;
  background: #221f22; color: #e6d2e5;
  font: 600 18px/32px Inter, sans-serif; text-align: center;
}
.clock { width: 260px; margin: -2px 0 0 32px; letter-spacing: .35px; white-space: nowrap; }

.window {
  display: flex;
  flex-direction: column;
  height: 1668px;
  margin-top: 2px;
  flex: none;
  border-radius: 20px;
  overflow: hidden;
  background: #fff;
}

.tabstrip {
  display: flex;
  align-items: center;
  height: 84px;
  flex: none;
  background: #dee0e4;
  border-top: 2px solid #eff0f3;
  padding-top: 14px;
}
.lights { display: flex; gap: 16px; width: 187px; padding-left: 42px; margin-top: -14px; }
.lights i { width: 24px; height: 24px; border-radius: 50%; }
.red { background: #ec6a5e; }
.amber { background: #f4bf4f; }
.green { background: #61c554; }
.tabs { display: grid; grid-template-columns: repeat(4, 252px) repeat(3, 250px) 249px 251px 250px; height: 68px; }
.tab {
  position: relative;
  display: flex;
  align-items: center;
  padding: 0 22px 0 23px;
  font-size: 24px;
}
.tab span { width: 125px; margin: -1px 0 0 16px; overflow: hidden; white-space: nowrap; }
.fade { -webkit-mask-image: linear-gradient(90deg, #000 55%, transparent 105%); mask-image: linear-gradient(90deg, #000 55%, transparent 105%); }
.fav { width: 32px; height: 32px; flex: none; }
.x { width: 20px; height: 20px; color: #3c4043; }
.tab .x { margin-left: auto; margin-right: 0; }
.tab.sep::after {
  content: "";
  position: absolute;
  right: -1px; top: 15px;
  width: 2px; height: 40px;
  background: #85888c;
}
.tab.active { background: #fff; border-radius: 16px 16px 0 0; }
.tab.active::before, .tab.active::after {
  content: "";
  position: absolute;
  bottom: 0;
  width: 16px; height: 16px;
}
.tab.active::before { left: -16px; background: radial-gradient(circle at 0 0, transparent 15.500px, #fff 16px); }
.tab.active::after { right: -16px; background: radial-gradient(circle at 100% 0, transparent 15.500px, #fff 16px); }
.plus { width: 26px; height: 26px; margin-left: 32px; }
.tabsearch { width: 20px; height: 14px; margin-left: auto; margin-right: 34px; }

.toolbar { display: flex; align-items: center; height: 72px; flex: none; padding: 0 40px 0 30px; }
.nav-ico { width: 28px; height: 28px; margin-right: 36px; }
.nav-ico:nth-child(3) { margin-right: 30px; }
.omnibox {
  display: flex;
  align-items: center;
  width: 2444px;
  height: 56px;
  flex: none;
  padding-left: 27px;
  border-radius: 28px;
  background: #f1f3f4;
}
.lock { width: 18px; height: 24px; }
.url { margin-left: 23px; font-size: 27.800px; color: #202124; white-space: nowrap; }
.url span { color: #6b6e72; }
.share { width: 24px; height: 30px; margin-left: auto; }
.star { width: 30px; height: 30px; margin: 0 21px 0 37px; }
.ext { width: 30px; height: 30px; margin-left: 29px; }
.panel { width: 28px; height: 28px; margin-left: 35px; }
.avatar {
  width: 44px; height: 44px; margin-left: 28px; flex: none;
  border-radius: 50%;
  background: #e0752d; color: #fff;
  font-size: 24px; line-height: 44px; text-align: center;
}
.dots { width: 8px; height: 28px; margin-left: 38px; }

.bookmarks {
  display: grid;
  grid-template-columns: 222px 295px 299px 297px 296px 279px 299px 309px 291px 272px 30px;
  align-items: center;
  height: 66px;
  flex: none;
  padding: 0 0 10px 28px;
  border-bottom: 2px solid #dcdcdc;
  font-size: 24px;
  letter-spacing: -.05px;
  white-space: nowrap;
}
.bookmarks a { display: flex; align-items: center; gap: 16.500px; }
.glass { background: #000; color: #fff; font: 700 26px/26px "Liberation Mono", monospace; text-align: center; }
.more { font-size: 26px; }

.page {
  display: flex;
  flex-direction: column;
  height: 1332px;
  flex: none;
  overflow: hidden;
  background: #fdfdfd;
  font-family: Lato, sans-serif;
  font-size: 32px;
  line-height: 51.200px;
  color: #111;
}
.sitenav {
  position: relative;
  display: grid;
  grid-template-columns: 170px 210px 209px 300px;
  align-items: center;
  height: 100px;
  flex: none;
  padding: 2px 0 0 33px;
  background: #fdfdfd;
  box-shadow: 0 1px 7px rgba(0, 0, 0, .5);
  color: #000;
  font-size: 31px;
  letter-spacing: -.6px;
}
.sitenav span { display: flex; align-items: center; }
.caret { margin-left: 21px; border: 9px solid transparent; border-top: 10px solid #adb5bd; border-bottom: 0; }
.content { display: flex; align-items: flex-start; margin-top: -2px; padding-left: 500px; }
article { width: 1333px; white-space: nowrap; word-spacing: -1.200px; }
article p, article ol, article ul { margin: 0 0 39.700px; }
article ol, article ul { padding-left: 40px; }
.plain { font-variant-ligatures: none; }
.loose { word-spacing: -.75px; }
h3 {
  margin: 0;
  height: 63.700px;
  font: 400 39px/70px "DejaVu Serif", serif;
  letter-spacing: -.4px;
  word-spacing: 0;
  -webkit-text-stroke: 1px #222;
  color: #222;
}
h3.second { height: 63px; letter-spacing: 0; line-height: 69px; }
code {
  padding: 5px 10px 3px;
  background: #f8ebcf;
  color: #333;
  font: 27.900px/0 "DejaVu Sans Mono", monospace;
  word-spacing: 0;
}
mark { background: #b8cce3; color: #333; padding: 11px 0 7px; }
.toc {
  width: 703px;
  height: 1400px;
  margin-top: 239px;
  flex: none;
  padding: 39.500px 40px;
  border: 2px solid #c8c8c8;
  border-radius: 6px;
  background: #e4e4e4;
  color: #333;
  font-weight: 700;
  font-variant-ligatures: none;
  white-space: nowrap;
}
.toc-title { margin-bottom: 40px; }
.toc ul { margin: 0; padding-left: 40px; }
.toc a { color: #3a4f5f; border-bottom: 2px dotted #3a4f5f; }
.joined { font-variant-ligatures: normal; }

.shelf {
  display: flex;
  align-items: center;
  height: 114px;
  flex: none;
  border-top: 2px solid #dadada;
  background: linear-gradient(#fff 45%, #f6f6f6 75%, #e8e8e8);
  font-size: 26px;
}
.dl {
  display: flex;
  align-items: center;
  width: 466.200px;
  height: 88px;
  padding: 0 36px 0 34px;
  border-right: 2px solid #cbcbcb;
}
.dl.first { width: 473px; padding-left: 41px; letter-spacing: -.2px; }
.file { width: 30px; height: 34px; margin-top: -2px; }
.dl span { margin-left: 27px; }
.up { width: 20px; height: 14px; margin-left: auto; color: #5f6368; }
.showall {
  width: 164px; height: 64px;
  margin: -2px 26px 0 auto;
  border: 2px solid #dcdcdc;
  border-radius: 8px;
  color: #3a73de;
  font-size: 24px; font-weight: 500; line-height: 58px; text-align: center;
}
.shelf-x { margin: -2px 26px 0 0; color: #5f6368; }

.dock {
  display: flex;
  width: 2734px;
  height: 142px;
  margin: 18px 0 0 103px;
  flex: none;
  padding: 19px 21px 0 3px;
  border: 2px solid rgba(255, 255, 255, .2);
  border-radius: 42px;
  background: linear-gradient(90deg, #7a5bd0 0, #775bcd 400px, #6f5cc6 750px, #735ed6 1120px, #8858f2 1220px, #8b57f8 1550px, #a558f7 1800px, #b356f8 1950px, #b057f8 2150px, #9a58f7 2550px, #9058f6) border-box;
}
.app { position: relative; width: 119px; height: 119px; flex: none; padding-left: 14.500px; }
.app > svg, .cal { width: 90px; height: 90px; filter: drop-shadow(0 2px 2px rgba(0, 0, 0, .25)); }
.over { overflow: visible; }
.petals rect { mix-blend-mode: multiply; opacity: .8; }
.run::after {
  content: "";
  position: absolute;
  left: 55.500px; bottom: 2px;
  width: 8px; height: 8px;
  border-radius: 50%;
  background: #1c0478;
}
.cal { border-radius: 20px; overflow: hidden; background: #fafafa; text-align: center; color: #222; }
.cal b { display: block; height: 28px; background: #e2574c; color: #fff; font-size: 19px; font-weight: 600; line-height: 30px; }
.cal span { display: block; font-size: 54px; font-weight: 300; line-height: 58px; letter-spacing: -2px; }
.badge {
  position: absolute;
  right: 0; top: -10px;
  width: 42px; height: 42px;
  border-radius: 50%;
  background: #e8504a; color: #fff;
  font-size: 24px; line-height: 42px; text-align: center;
}
.rule { width: 2px; height: 106px; margin: -3px 25px 0 27px; flex: none; background: #7a2bc6; }
.rule.two { margin: -3px 0 0 27px; }
.mini { width: 32px; height: 36px; margin: 60px 0 0 100px; }
.trash { width: 80px; height: 104px; margin: -9px 0 0 30px; }
```
